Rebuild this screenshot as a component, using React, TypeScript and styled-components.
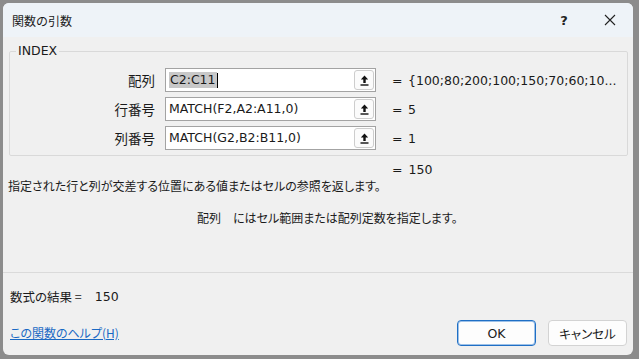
import { Fragment } from 'react';
import styled, { createGlobalStyle } from 'styled-components';

const GlobalStyle = createGlobalStyle`
  html, body {
    margin: 0;
    padding: 0;
    background: #8c8c8c;
  }
  body {
    width: 639px;
    height: 359px;
    overflow: hidden;
    font-family: 'Noto Sans CJK JP', sans-serif;
    color: #1a1a1a;
  }
`;

const Screen = styled.div`
  width: 639px;
  height: 359px;
  box-sizing: border-box;
  padding: 3px 6px 4px 3px;
`;

const Window = styled.div`
  width: 630px;
  height: 352px;
  background: #f0f0f0;
  border-radius: 6px;
  overflow: hidden;
  display: flex;
  flex-direction: column;
`;

const TitleBar = styled.div`
  height: 34px;
  flex: none;
  display: flex;
  align-items: center;
  padding-left: 9px;
  background: #eef3f8;
  font-size: 12px;
`;

const TitleText = styled.span`
  line-height: 16px;
  margin-top: 2px;
`;

const TitleButtons = styled.div`
  margin-left: auto;
  display: flex;
  height: 100%;
`;

const TitleButton = styled.div`
  width: 46px;
  height: 100%;
  display: flex;
  align-items: center;
  justify-content: center;
  font-family: 'DejaVu Sans', sans-serif;
  font-size: 13px;
  font-weight: bold;
  color: #222;
`;

const GroupBox = styled.fieldset`
  margin: 6px 5px 0 6px;
  padding: 9px 0 5px 0;
  border: 1px solid #d9d9d9;
  border-radius: 2px;
  min-width: 0;
`;

const Legend = styled.legend`
  margin-left: 6px;
  padding: 0 2px;
  font-family: 'DejaVu Sans', sans-serif;
  font-size: 12.5px;
  line-height: 16px;
  color: #1a1a1a;
`;

const ArgGrid = styled.div`
  display: grid;
  grid-template-columns: 155px 211px 32px 1fr;
  grid-auto-rows: 24px;
  row-gap: 5px;
  align-items: center;
`;

const ArgLabel = styled.div`
  text-align: right;
  padding-right: 10px;
  font-size: 13.5px;
  line-height: 16px;
`;

const InputBox = styled.div`
  height: 24px;
  box-sizing: border-box;
  border: 1px solid #a3a3a3;
  background: #fff;
  display: flex;
  align-items: center;
  padding: 0 1px 0 3px;
`;

const InputText = styled.div`
  flex: 1;
  font-family: 'DejaVu Sans', sans-serif;
  font-size: 12.5px;
  line-height: 16px;
  white-space: nowrap;
  display: flex;
  align-items: center;
`;

const Selected = styled.span`
  background: #c8c8c8;
  padding: 0 1px;
`;

const Caret = styled.span`
  display: inline-block;
  width: 1px;
  height: 15px;
  background: #000;
`;

const PickButton = styled.div`
  width: 20px;
  height: 20px;
  box-sizing: border-box;
  border: 1px solid #cdcdcd;
  border-radius: 3px;
  background: #fbfbfb;
  display: flex;
  align-items: center;
  justify-content: center;
`;

const Equals = styled.div`
  padding-left: 16px;
  font-family: 'DejaVu Sans', sans-serif;
  font-size: 12.5px;
`;

const Value = styled.div`
  font-family: 'DejaVu Sans', sans-serif;
  font-size: 12.5px;
  white-space: nowrap;
  overflow: hidden;
`;

const ResultLine = styled.div`
  margin-top: 6px;
  padding-left: 389px;
  display: flex;
  gap: 6px;
  font-family: 'DejaVu Sans', sans-serif;
  font-size: 12.5px;
  line-height: 16px;
`;

const Description = styled.div<{ $indent?: number }>`
  padding-left: ${(p) => p.$indent ?? 5}px;
  font-size: 12px;
  line-height: 16px;
  font-feature-settings: 'palt';
  white-space: nowrap;
`;

const ArgHelp = styled(Description)`
  margin-top: 16px;
  display: flex;
  gap: 12px;
`;

const Separator = styled.div`
  margin-top: auto;
  border-top: 1px solid #dadada;
`;

const FormulaResult = styled.div`
  margin-top: 16px;
  padding-left: 7px;
  display: flex;
  gap: 13px;
  font-size: 12.5px;
  line-height: 16px;
  font-feature-settings: 'palt';
`;

const Latin = styled.span`
  font-family: 'DejaVu Sans', sans-serif;
`;

const Footer = styled.div`
  margin-top: 15px;
  padding: 0 6px 9px 7px;
  display: flex;
  align-items: center;
  gap: 12px;
`;

const HelpLink = styled.a`
  margin-right: auto;
  color: #1a69c4;
  text-decoration: underline;
  font-size: 12px;
  line-height: 16px;
  font-feature-settings: 'palt';
`;

const DialogButton = styled.button<{ $primary?: boolean }>`
  width: 79px;
  height: 26px;
  box-sizing: border-box;
  border-radius: 4px;
  background: #fdfdfd;
  border: 1px solid ${(p) => (p.$primary ? '#1f6fc5' : '#d3d3d3')};
  box-shadow: ${(p) => (p.$primary ? 'inset 0 0 0 1px #9dc1e8' : 'none')};
  font-family: 'DejaVu Sans', 'Noto Sans CJK JP', sans-serif;
  font-size: 12.5px;
  color: #1a1a1a;
  padding: 0;
  font-feature-settings: 'palt';
`;

const UploadIcon = () => (
  <svg width="9" height="11" viewBox="0 0 9 11">
    <path d="M4.5 0.5 L0.8 4.6 H3.3 V8 H5.7 V4.6 H8.2 Z" fill="#111" />
    <rect x="0.5" y="9.3" width="8" height="1.4" fill="#111" />
  </svg>
);

const CloseIcon = () => (
  <svg width="12" height="12" viewBox="0 0 12 12">
    <path d="M1 1 L11 11 M11 1 L1 11" stroke="#222" strokeWidth="1.1" />
  </svg>
);

const args = [
  { label: '配列', value: '{100;80;200;100;150;70;60;10...', text: null },
  { label: '行番号', value: '5', text: 'MATCH(F2,A2:A11,0)' },
  { label: '列番号', value: '1', text: 'MATCH(G2,B2:B11,0)' },
];

export default function App() {
  return (
    <Screen>
      <GlobalStyle />
      <Window>
        <TitleBar>
          <TitleText>関数の引数</TitleText>
          <TitleButtons>
            <TitleButton>?</TitleButton>
            <TitleButton>
              <CloseIcon />
            </TitleButton>
          </TitleButtons>
        </TitleBar>

        <GroupBox>
          <Legend>INDEX</Legend>
          <ArgGrid>
            {args.map((arg) => (
              <Fragment key={arg.label}>
                <ArgLabel>{arg.label}</ArgLabel>
                <InputBox>
                  <InputText>
                    {arg.text ?? (
                      <>
                        <Selected>C2:C11</Selected>
                        <Caret />
                      </>
                    )}
                  </InputText>
                  <PickButton>
                    <UploadIcon />
                  </PickButton>
                </InputBox>
                <Equals>=</Equals>
                <Value>{arg.value}</Value>
              </Fragment>
            ))}
          </ArgGrid>
        </GroupBox>

        <ResultLine>
          <span>=</span>
          <span>150</span>
        </ResultLine>
        <Description>指定された行と列が交差する位置にある値またはセルの参照を返します。</Description>
        <ArgHelp $indent={194}>
          <span>配列</span>
          <span>にはセル範囲または配列定数を指定します。</span>
        </ArgHelp>

        <Separator />
        <FormulaResult>
          <span>数式の結果 =</span>
          <Latin>150</Latin>
        </FormulaResult>
        <Footer>
          <HelpLink href="#">この関数のヘルプ(H)</HelpLink>
          <DialogButton $primary>OK</DialogButton>
          <DialogButton>キャンセル</DialogButton>
        </Footer>
      </Window>
    </Screen>
  );
}
